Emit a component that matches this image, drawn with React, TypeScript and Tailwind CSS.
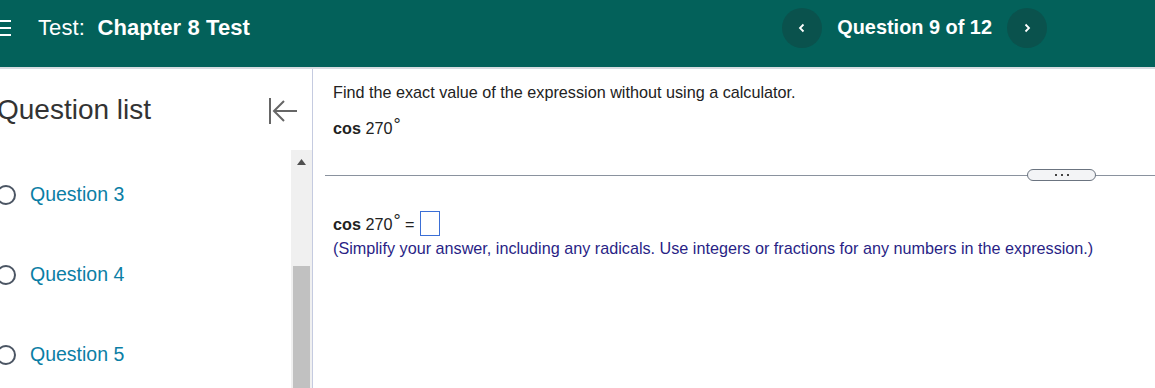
import React from "react";

const font = { fontFamily: '"Liberation Sans", Arial, sans-serif' };

function Radio() {
  return <div className="w-[20px] h-[20px] rounded-full border-[2.5px] border-[#4b5563] shrink-0" />;
}

function Deg() {
  return <span className="relative -top-[3px] text-[18px] leading-none ml-[1px]">°</span>;
}

export default function App() {
  return (
    <div className="w-[1155px] h-[388px] overflow-hidden bg-white flex flex-col" style={font}>
      <header className="h-[69px] shrink-0 bg-[#03615a] border-b-2 border-[#d6dbe0] flex items-start">
        <div className="flex items-center h-[55px] w-full">
          <div className="flex flex-col gap-[5px] w-[11px] ml-0">
            <span className="h-[2px] bg-white block" />
            <span className="h-[2px] bg-white block" />
            <span className="h-[2px] bg-white block" />
          </div>
          <div className="ml-[27px] text-white text-[22px] tracking-[0.1px]">
            Test:&nbsp; <span className="font-bold">Chapter 8 Test</span>
          </div>
          <div className="ml-auto mr-[108px] flex items-center">
            <button className="w-[40px] h-[40px] rounded-full bg-[#0a524d] flex items-center justify-center text-white">
              <svg width="10" height="10" viewBox="0 0 10 10"><path d="M6.5 1.5 3 5l3.5 3.5" fill="none" stroke="white" strokeWidth="1.8" /></svg>
            </button>
            <div className="mx-[15px] text-white font-bold text-[19.9px]">Question 9 of 12</div>
            <button className="w-[40px] h-[40px] rounded-full bg-[#0a524d] flex items-center justify-center text-white">
              <svg width="10" height="10" viewBox="0 0 10 10"><path d="M3.5 1.5 7 5 3.5 8.5" fill="none" stroke="white" strokeWidth="1.8" /></svg>
            </button>
          </div>
        </div>
      </header>
      <div className="flex flex-1 min-h-0">
        <aside className="w-[313px] shrink-0 border-r border-[#c5cbe0] flex flex-col overflow-hidden">
          <div className="h-[81px] shrink-0 flex items-center">
            <h2 className="-ml-[3px] text-[28px] text-[#333] leading-none mt-[1px]">Question list</h2>
            <svg className="ml-auto mr-[14px] mt-[2px]" width="30" height="28" viewBox="0 0 30 28" fill="none" stroke="#666" strokeWidth="2">
              <path d="M2 1v26" />
              <path d="M7 14h22" />
              <path d="M16 4 6 14l10 10" />
            </svg>
          </div>
          <div className="flex flex-1 min-h-0">
            <div className="flex-1 flex flex-col pt-[35px] gap-[60px]">
              {[3, 4, 5].map((n) => (
                <div key={n} className="flex items-center h-[20px] -ml-[4px]">
                  <Radio />
                  <span className="ml-[14px] text-[19.5px] text-[#0b7ea5]">Question {n}</span>
                </div>
              ))}
            </div>
            <div className="w-[21px] bg-[#f0f0f0] flex flex-col items-center">
              <svg className="mt-[9px]" width="9" height="6" viewBox="0 0 9 6"><path d="M4.5 0 9 6H0z" fill="#505050" /></svg>
              <div className="mt-[101px] w-[17px] flex-1 bg-[#c1c1c1]" />
            </div>
          </div>
        </aside>
        <main className="flex-1 flex flex-col pt-[12px]">
          <p className="pl-[20px] text-[16.2px] text-[#222] leading-[22px]">Find the exact value of the expression without using a calculator.</p>
          <p className="pl-[20px] mt-[14px] text-[16.2px] text-[#222] leading-[22px]">
            <span className="font-bold">cos</span> 270<Deg />
          </p>
          <div className="mt-[30px] ml-[12px] relative h-[12px] flex items-center">
            <div className="w-full h-px bg-[#8a929e]" />
            <div className="absolute left-[702px] top-0 w-[69px] h-[12px] rounded-full border border-[#6b7480] bg-[#f3f4f6] flex items-center justify-center gap-[4px]">
              <span className="w-[2px] h-[2px] bg-[#444] block" />
              <span className="w-[2px] h-[2px] bg-[#444] block" />
              <span className="w-[2px] h-[2px] bg-[#444] block" />
            </div>
          </div>
          <div className="mt-[30px] pl-[20px] flex items-center text-[16.2px] text-[#222] leading-[22px]">
            <span className="font-bold">cos</span>&nbsp;270<Deg />&nbsp;=&nbsp;
            <span className="inline-block w-[20px] h-[25px] border border-[#3b6fd6] ml-[1px]" />
          </div>
          <p className="pl-[20px] mt-[1px] text-[16.2px] text-[#2a1f86] leading-[22px]">
            (Simplify your answer, including any radicals. Use integers or fractions for any numbers in the expression.)
          </p>
        </main>
      </div>
    </div>
  );
}
